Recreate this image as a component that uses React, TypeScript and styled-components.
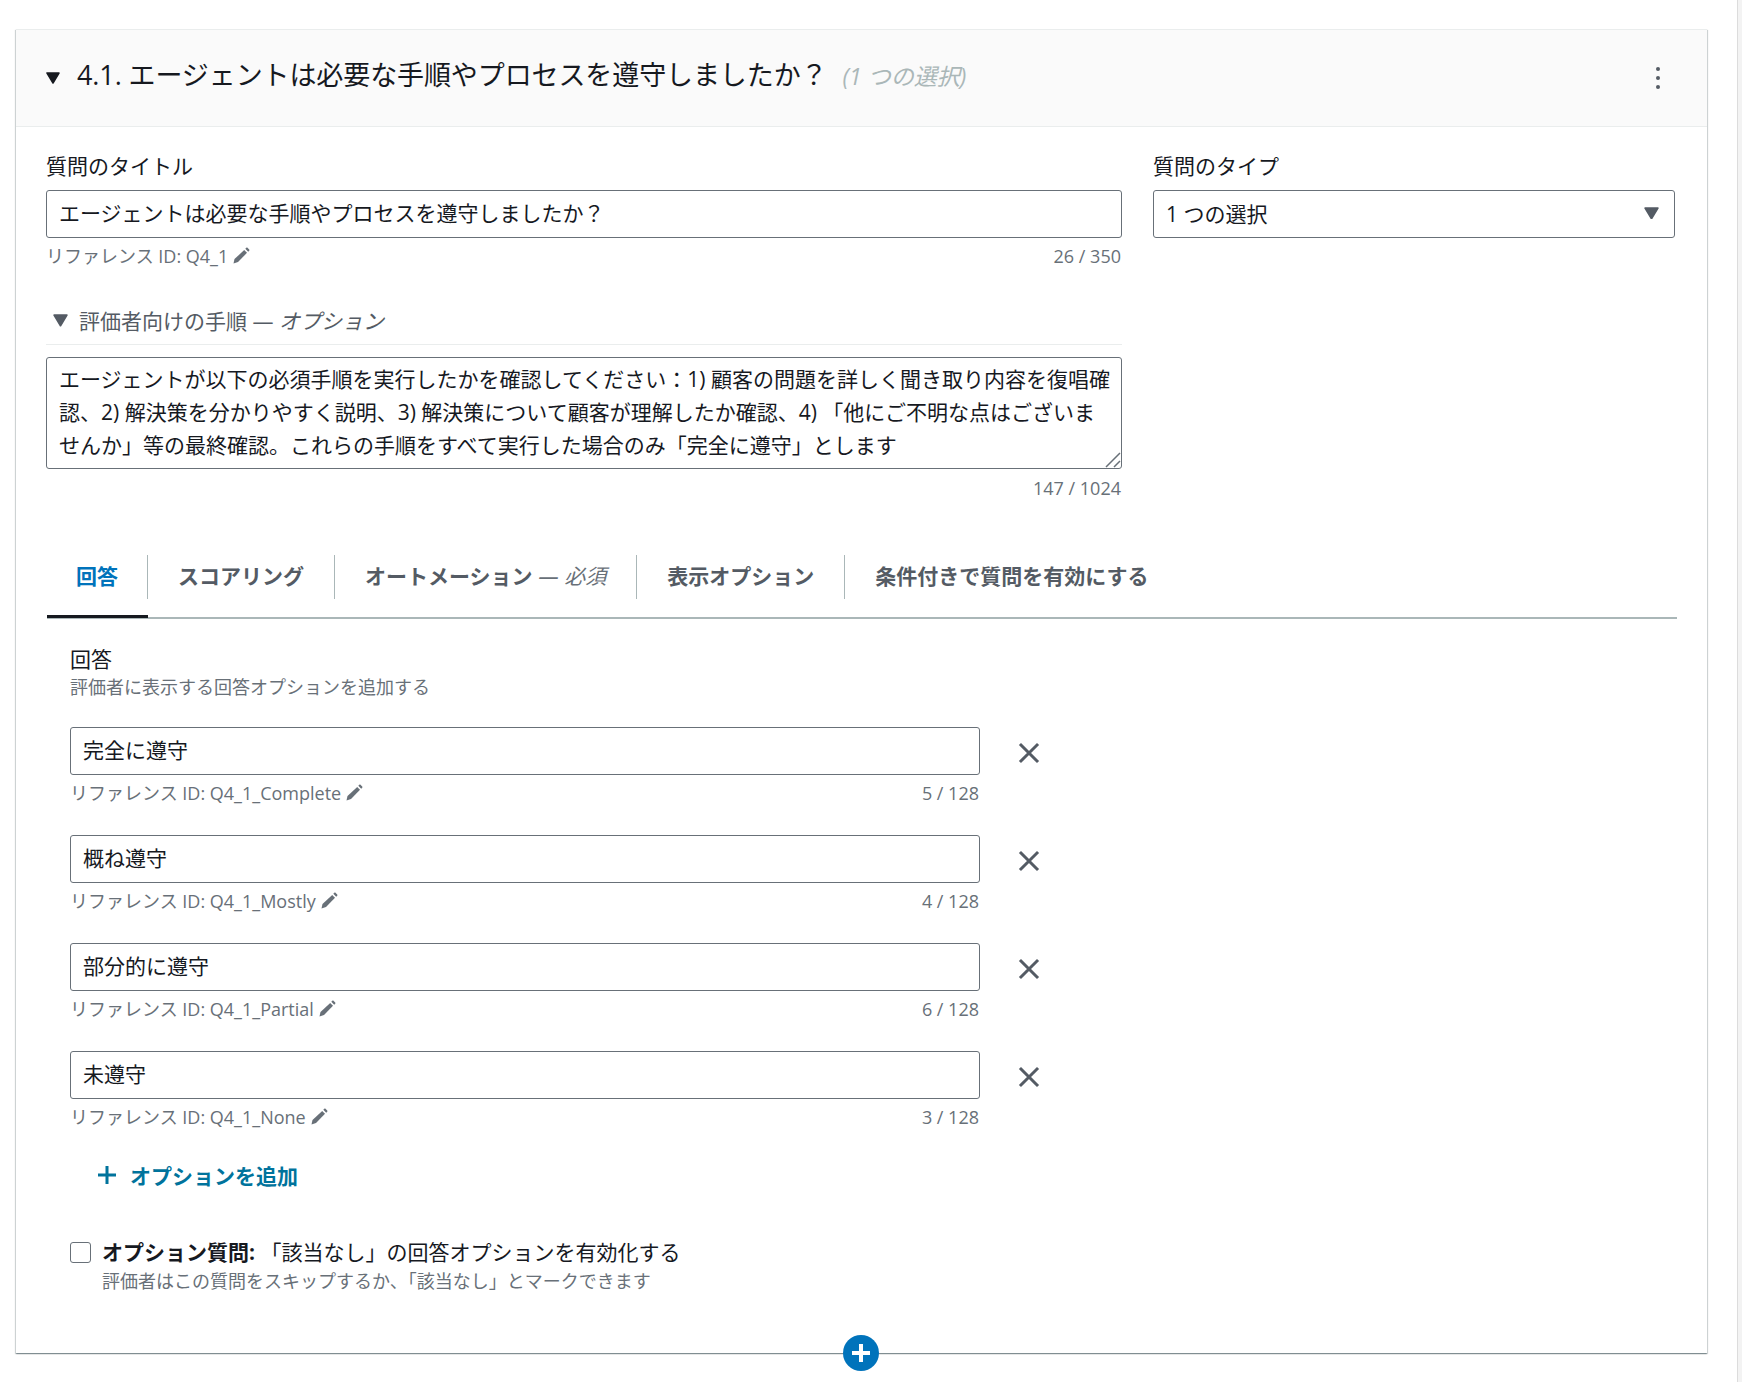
import styled, { createGlobalStyle } from 'styled-components';

const GlobalStyle = createGlobalStyle`
  html, body {
    margin: 0;
    padding: 0;
    background: #fff;
    overflow: hidden;
  }
  body, input, textarea {
    font-family: "Open Sans", "Noto Sans CJK JP", sans-serif;
    color: #16191f;
  }
  * {
    box-sizing: border-box;
  }
`;

const Page = styled.div`
  display: flex;
  height: 1382px;
`;

const Main = styled.main`
  flex: 1;
  padding: 29px 30px 0 16px;
`;

const ScrollTrack = styled.div`
  width: 5px;
  background: #f3f3f3;
  border-left: 1px solid #dcdcdc;
`;

const Card = styled.section`
  position: relative;
  background: #fff;
  border-top: 1px solid #eaeded;
  box-shadow: 0 1px 1px 0 rgba(0, 28, 36, 0.3), 1px 1px 1px 0 rgba(0, 28, 36, 0.15),
    -1px 1px 1px 0 rgba(0, 28, 36, 0.15);
  height: 1324px;
`;

const CardHeader = styled.header`
  display: flex;
  align-items: center;
  height: 97px;
  padding: 0 47px 0 30px;
  background: #fafafa;
  border-bottom: 1px solid #eaeded;
`;

const CaretButton = styled.span<{ $color: string; $size: number }>`
  display: flex;
  flex: none;
  width: ${(p) => p.$size}px;
  color: ${(p) => p.$color};
`;

const Title = styled.h2`
  flex: 1;
  display: flex;
  align-items: baseline;
  gap: 15px;
  margin: 0 0 6px 17px;
  font-size: 27px;
  line-height: 36px;
  font-weight: 400;
  letter-spacing: -0.1px;
`;

const TitleNote = styled.span`
  font-size: 23px;
  font-style: italic;
  letter-spacing: 0;
  color: #aab7b8;
`;

const MenuDots = styled.span`
  display: flex;
  flex-direction: column;
  gap: 5px;
  i {
    display: block;
    width: 4px;
    height: 4px;
    border-radius: 50%;
    background: #545b64;
  }
`;

const TopGrid = styled.div`
  display: grid;
  grid-template-columns: 1076px 522px;
  column-gap: 31px;
  padding: 24px 0 0 30px;
`;

const Label = styled.label`
  display: block;
  font-size: 21px;
  line-height: 30px;
  margin-bottom: 9px;
`;

const TextInput = styled.input`
  display: block;
  width: 100%;
  height: 48px;
  padding: 0 12px 4px;
  border: 1px solid #687078;
  border-radius: 3px;
  background: #fff;
  font-size: 21px;
  outline: none;
`;

const SelectBox = styled.div`
  display: flex;
  align-items: center;
  justify-content: space-between;
  height: 48px;
  padding: 0 15px 2px 12px;
  border: 1px solid #687078;
  border-radius: 3px;
  font-size: 21px;
`;

const HintRow = styled.div`
  display: flex;
  align-items: center;
  justify-content: space-between;
  height: 24px;
  margin-top: 7px;
  padding: 0 1px 2px 0;
  font-size: 18px;
  line-height: 24px;
  color: #687078;
`;

const RefId = styled.span`
  display: flex;
  align-items: center;
  gap: 4px;
`;

const ExpandHeader = styled.div`
  display: flex;
  align-items: center;
  gap: 11px;
  height: 39px;
  margin-top: 37px;
  padding: 0 0 9px 7px;
  font-size: 21px;
  line-height: 30px;
  color: #545b64;
  border-bottom: 1px solid #eaeded;
  em {
    font-style: italic;
  }
`;

const AreaWrap = styled.div`
  position: relative;
  margin-top: 12px;
`;

const InstructionArea = styled.textarea`
  display: block;
  width: 100%;
  height: 112px;
  padding: 5px 12px;
  border: 1px solid #687078;
  border-radius: 3px;
  font-size: 21px;
  line-height: 33px;
  overflow: hidden;
  resize: none;
  outline: none;
`;

const ResizeGrip = styled.svg`
  position: absolute;
  right: 1px;
  bottom: 1px;
`;

const CounterRow = styled(HintRow)`
  justify-content: flex-end;
  padding-bottom: 0;
`;

const TabList = styled.ul`
  display: flex;
  list-style: none;
  margin: 55px 30px 0 31px;
  padding: 0;
  border-bottom: 2px solid #aab7b8;
`;

const Tab = styled.li<{ $active?: boolean }>`
  padding-bottom: 18px;
  position: relative;
  &::after {
    content: '';
    display: ${(p) => (p.$active ? 'block' : 'none')};
    position: absolute;
    left: 0;
    right: 0;
    bottom: -1px;
    height: 3px;
    background: #16191f;
  }
`;

const TabLabel = styled.a<{ $active?: boolean; $last?: boolean }>`
  display: flex;
  align-items: center;
  height: 44px;
  padding: 0 ${(p) => (p.$active ? 29 : 30)}px 4px ${(p) => (p.$active ? 29 : 30)}px;
  border-right: ${(p) => (p.$last ? 'none' : '1px solid #aab7b8')};
  font-size: 21px;
  font-weight: 700;
  color: ${(p) => (p.$active ? '#0073bb' : '#545b64')};
  white-space: nowrap;
  em {
    margin-left: 6px;
    font-weight: 400;
    color: #687078;
  }
`;

const AnswersPanel = styled.div`
  padding: 25px 0 0 54px;
`;

const PanelTitle = styled.div`
  font-size: 21px;
  line-height: 30px;
`;

const PanelDesc = styled.div`
  margin-top: 1px;
  font-size: 18px;
  line-height: 24px;
  color: #687078;
`;

const OptionList = styled.div`
  display: flex;
  flex-direction: column;
  gap: 29px;
  margin-top: 28px;
`;

const OptionRow = styled.div`
  display: flex;
  align-items: flex-start;
`;

const OptionField = styled.div`
  width: 910px;
`;

const RemoveButton = styled.span`
  display: flex;
  margin: 15px 0 0 38px;
  color: #545b64;
`;

const AddOption = styled.a`
  display: flex;
  align-items: center;
  gap: 14px;
  height: 30px;
  margin: 30px 0 0 28px;
  font-size: 21px;
  font-weight: 700;
  color: #00739c;
`;

const CheckRow = styled.div`
  display: flex;
  align-items: flex-start;
  gap: 11px;
  margin-top: 47px;
`;

const CheckBox = styled.span`
  flex: none;
  width: 21px;
  height: 21px;
  margin-top: 5px;
  border: 1.5px solid #687078;
  border-radius: 3px;
  background: #fff;
`;

const CheckLabel = styled.div`
  font-size: 21px;
  line-height: 30px;
  b {
    font-weight: 700;
  }
`;

const CheckDesc = styled.div`
  margin-top: 2px;
  font-size: 18px;
  line-height: 24px;
  color: #687078;
`;

const AddQuestion = styled.span`
  position: absolute;
  left: 50%;
  bottom: -18px;
  display: flex;
  align-items: center;
  justify-content: center;
  width: 36px;
  height: 36px;
  margin-left: -18.5px;
  border-radius: 50%;
  background: #0073bb;
`;

const Triangle = () => (
  <svg width="100%" viewBox="0 0 14 12" fill="currentColor" stroke="currentColor" strokeWidth="1.5" strokeLinejoin="round" style={{ display: 'block' }}>
    <path d="M1 1h12L7 11z" />
  </svg>
);

const Pencil = () => (
  <svg width="18" height="18" viewBox="0 0 18 18" fill="#687078">
    <path d="M12.2 3l2.8 2.8-9 9.2L1.5 16.5l1-4.4z" />
    <path d="M13.3 1.8l1-1c.4-.4.9-.4 1.2 0l1.7 1.7c.4.3.4.9 0 1.2l-1 1z" />
  </svg>
);

const CloseIcon = () => (
  <svg width="22" height="22" viewBox="0 0 22 22" fill="none" stroke="currentColor" strokeWidth="3" strokeLinecap="square">
    <path d="M3 3l16 16M19 3L3 19" />
  </svg>
);

const options = [
  { value: '完全に遵守', id: 'Q4_1_Complete', count: '5 / 128' },
  { value: '概ね遵守', id: 'Q4_1_Mostly', count: '4 / 128' },
  { value: '部分的に遵守', id: 'Q4_1_Partial', count: '6 / 128' },
  { value: '未遵守', id: 'Q4_1_None', count: '3 / 128' },
];

const tabs = ['回答', 'スコアリング', 'オートメーション', '表示オプション', '条件付きで質問を有効にする'];

const instructions =
  'エージェントが以下の必須手順を実行したかを確認してください：1) 顧客の問題を詳しく聞き取り内容を復唱確\n' +
  '認、2) 解決策を分かりやすく説明、3) 解決策について顧客が理解したか確認、4) 「他にご不明な点はございま\n' +
  'せんか」等の最終確認。これらの手順をすべて実行した場合のみ「完全に遵守」とします';

export default function App() {
  return (
    <Page>
      <GlobalStyle />
      <Main>
        <Card>
          <CardHeader>
            <CaretButton $color="#16191f" $size={14}>
              <Triangle />
            </CaretButton>
            <Title>
              4.1. エージェントは必要な手順やプロセスを遵守しましたか？
              <TitleNote>(1 つの選択)</TitleNote>
            </Title>
            <MenuDots>
              <i />
              <i />
              <i />
            </MenuDots>
          </CardHeader>

          <TopGrid>
            <div>
              <Label>質問のタイトル</Label>
              <TextInput readOnly value="エージェントは必要な手順やプロセスを遵守しましたか？" />
              <HintRow>
                <RefId>
                  リファレンス ID: Q4_1 <Pencil />
                </RefId>
                <span>26 / 350</span>
              </HintRow>
              <ExpandHeader>
                <CaretButton $color="#545b64" $size={15}>
                  <Triangle />
                </CaretButton>
                <span>
                  評価者向けの手順 — <em>オプション</em>
                </span>
              </ExpandHeader>
              <AreaWrap>
                <InstructionArea readOnly wrap="off" value={instructions} />
                <ResizeGrip width="16" height="16" viewBox="0 0 16 16" fill="none" stroke="#687078" strokeWidth="1.5">
                  <path d="M1 15L15 1M9 15l6-6" />
                </ResizeGrip>
              </AreaWrap>
              <CounterRow>147 / 1024</CounterRow>
            </div>
            <div>
              <Label>質問のタイプ</Label>
              <SelectBox>
                1 つの選択
                <CaretButton $color="#545b64" $size={15}>
                  <Triangle />
                </CaretButton>
              </SelectBox>
            </div>
          </TopGrid>

          <TabList>
            {tabs.map((tab, i) => (
              <Tab key={tab} $active={i === 0}>
                <TabLabel $active={i === 0} $last={i === tabs.length - 1}>
                  {tab}
                  {i === 2 && <em>— 必須</em>}
                </TabLabel>
              </Tab>
            ))}
          </TabList>

          <AnswersPanel>
            <PanelTitle>回答</PanelTitle>
            <PanelDesc>評価者に表示する回答オプションを追加する</PanelDesc>
            <OptionList>
              {options.map((option) => (
                <OptionRow key={option.id}>
                  <OptionField>
                    <TextInput readOnly value={option.value} />
                    <HintRow>
                      <RefId>
                        リファレンス ID: {option.id} <Pencil />
                      </RefId>
                      <span>{option.count}</span>
                    </HintRow>
                  </OptionField>
                  <RemoveButton>
                    <CloseIcon />
                  </RemoveButton>
                </OptionRow>
              ))}
            </OptionList>
            <AddOption>
              <svg width="18" height="18" viewBox="0 0 18 18" fill="none" stroke="currentColor" strokeWidth="3">
                <path d="M9 0v18M0 9h18" />
              </svg>
              オプションを追加
            </AddOption>
            <CheckRow>
              <CheckBox />
              <div>
                <CheckLabel>
                  <b>オプション質問:</b> 「該当なし」の回答オプションを有効化する
                </CheckLabel>
                <CheckDesc>評価者はこの質問をスキップするか、「該当なし」とマークできます</CheckDesc>
              </div>
            </CheckRow>
          </AnswersPanel>

          <AddQuestion>
            <svg width="18" height="18" viewBox="0 0 18 18" fill="none" stroke="#fff" strokeWidth="4">
              <path d="M9 0v18M0 9h18" />
            </svg>
          </AddQuestion>
        </Card>
      </Main>
      <ScrollTrack />
    </Page>
  );
}
